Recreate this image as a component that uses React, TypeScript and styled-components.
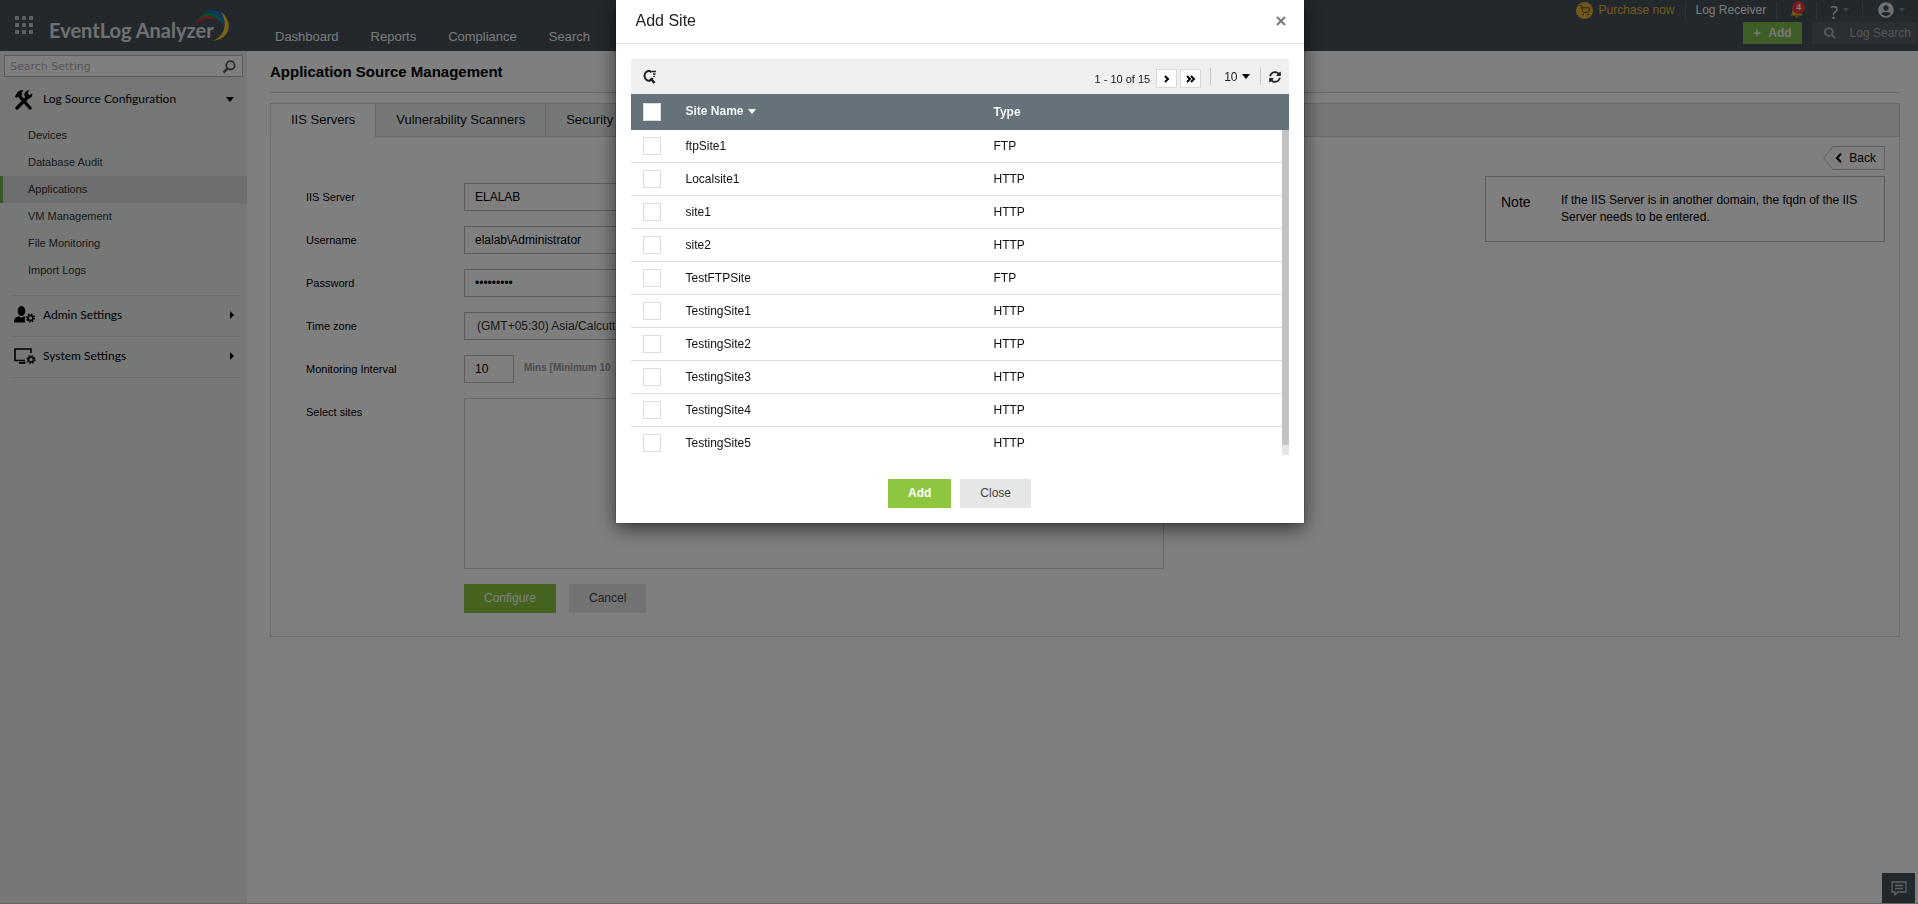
import React from "react";
import styled, { createGlobalStyle } from "styled-components";
import { FaPlus, FaSearch, FaSyncAlt, FaUserCircle } from "react-icons/fa";
import { FiShoppingCart } from "react-icons/fi";
import { MdNotifications } from "react-icons/md";

const GlobalStyle = createGlobalStyle`
  * { box-sizing: border-box; }
  body {
    margin: 0;
    font-family: "Liberation Sans", Arial, sans-serif;
    font-size: 12px;
    color: #000;
    background: #fff;
  }
  button, input, select, textarea { font-family: inherit; font-size: 12px; margin: 0; }
  button { cursor: pointer; padding: 0; border: 0; background: none; }
  a { text-decoration: none; color: inherit; }
  svg { display: block; flex: none; }
`;

const Page = styled.div`
  min-height: 100vh;
  display: flex;
  flex-direction: column;
  border-bottom: 1px solid #ccc;
`;

/* ---------- top bar ---------- */

const TopBar = styled.header`
  display: flex;
  height: 51px;
  background: #465059;
`;

const Brand = styled.div`
  display: flex;
  width: 259px;
  padding: 0 0 0 15px;
  gap: 16px;
`;

const AppsButton = styled.button`
  display: grid;
  grid-template-columns: repeat(3, 4px);
  gap: 3px;
  align-content: start;
  width: 18px;
  padding-top: 16px;
`;

const AppsDot = styled.span`
  height: 4px;
  background: #bcc0c3;
`;

const Logo = styled.div`
  position: relative;
  padding-top: 17px;
  font: 700 20px/26px Lato, sans-serif;
  color: #e0e0e0;
  white-space: nowrap;
`;

const LogoArcs = styled.svg`
  position: absolute;
  left: 146px;
  top: 8px;
`;

const Nav = styled.nav`
  display: flex;
  flex: 1;
  align-items: flex-end;
  padding-bottom: 6px;
`;

const NavLink = styled.a`
  padding: 0 16px;
  font-size: 13px;
  line-height: 16px;
  color: #f2f2f2;
`;

const Tools = styled.div`
  display: flex;
  flex-direction: column;
  align-items: flex-end;
  gap: 2px;
`;

const ToolRow = styled.div`
  display: flex;
  align-items: center;
  height: 20px;
  padding-right: 13px;
`;

const ToolItem = styled.button<{ $gold?: boolean; $pad?: number }>`
  display: flex;
  align-items: center;
  gap: 5px;
  position: relative;
  height: 17px;
  padding: 0 ${(p) => p.$pad ?? 10}px;
  color: ${(p) => (p.$gold ? "#e6b432" : "#f2f2f2")};
  & + & { border-left: 1px solid #5c666e; }
  &:last-child { padding-right: 0; }
`;

const CartBadge = styled.span`
  display: flex;
  align-items: center;
  justify-content: center;
  width: 17px;
  height: 17px;
  border-radius: 50%;
  background: #e6ac32;
  color: #4b4636;
`;

const Count = styled.span`
  position: absolute;
  top: -1px;
  right: 11px;
  width: 13px;
  height: 13px;
  border-radius: 50%;
  background: #e8393a;
  color: #fff;
  font: bold 9px/13px "Liberation Sans", sans-serif;
  text-align: center;
`;

const Question = styled.span`
  font: 18px/17px "Open Sans", sans-serif;
  padding-top: 4px;
  color: #ddd;
`;

const Caret = styled.span<{ $size?: number; $color?: string; $right?: boolean }>`
  width: 0;
  height: 0;
  border: ${(p) => p.$size ?? 4}px solid transparent;
  ${(p) =>
    p.$right
      ? `border-left-color: ${p.$color ?? "#000"}; border-right: 0;`
      : `border-top-color: ${p.$color ?? "#000"}; border-top-width: ${(p.$size ?? 4) + 1}px; border-bottom: 0;`}
`;

const ActionRow = styled.div`
  display: flex;
  gap: 10px;
  padding-right: 1px;
`;

const AddButton = styled.button`
  display: flex;
  align-items: center;
  gap: 7px;
  height: 22px;
  padding: 0 10px;
  font-weight: bold;
  color: #eef2ea;
  background: #80ba50;
`;

const LogSearch = styled.button`
  display: flex;
  align-items: center;
  gap: 14px;
  height: 22px;
  padding: 0 6px 0 12px;
  color: #a9adb0;
  background: #565f66;
`;

/* ---------- sidebar ---------- */

const Body = styled.div`
  display: flex;
  flex: 1;
`;

const Sidebar = styled.aside`
  flex: none;
  width: 247px;
  background: #ecf0ef;
`;

const SearchBox = styled.div`
  display: flex;
  align-items: center;
  height: 22px;
  margin: 4px 4px 0;
  padding: 1px 6px 0 5px;
  background: #fff;
  border: 1px solid #b4b8b8;
`;

const SearchInput = styled.input`
  flex: 1;
  min-width: 0;
  padding: 0;
  border: 0;
  outline: 0;
  background: none;
  font: 11px/16px "DejaVu Sans", sans-serif;
  &::placeholder { color: #adadad; opacity: 1; }
`;

const GroupButton = styled.button`
  display: flex;
  align-items: center;
  width: 100%;
  height: 40px;
  padding: 0 13px 2px 12px;
  font: 12px/18px Lato, sans-serif;
  color: #000;
  text-align: left;
`;

const GroupIcon = styled.span`
  display: flex;
  width: 31px;
  padding-left: 2px;
`;

const GroupLabel = styled.span`
  flex: 1;
`;

const SideGroup = styled.section<{ $open?: boolean }>`
  padding-top: ${(p) => (p.$open ? 3 : 0)}px;
`;

const SideDivider = styled.hr`
  height: 1px;
  margin: 0 7px 0 10px;
  border: 0;
  background: #d8dcdc;
`;

const SideList = styled.ul`
  margin: 2px 0 11px;
  padding: 0;
  list-style: none;
`;

const SideLink = styled.a<{ $active?: boolean }>`
  display: block;
  padding-left: 25px;
  border-left: 3px solid ${(p) => (p.$active ? "#70b04c" : "transparent")};
  font-size: 11px;
  line-height: 27px;
  color: #333;
  background: ${(p) => (p.$active ? "#d9dcdf" : "none")};
`;

/* ---------- main content ---------- */

const Main = styled.main`
  flex: 1;
  min-width: 0;
  padding: 0 18px 20px 23px;
`;

const Title = styled.h1`
  margin: 0 0 10px;
  padding: 11px 0;
  border-bottom: 1px solid #d0d0d0;
  font-size: 15px;
  line-height: 19px;
`;

const Tabs = styled.div`
  display: flex;
  height: 34px;
  background: #ecf0ef;
  border: 1px solid #d2d6d6;
`;

const Tab = styled.button<{ $active?: boolean }>`
  height: ${(p) => (p.$active ? 33 : 32)}px;
  padding: 0 20px 2px;
  border-right: 1px solid #d2d6d6;
  font-size: 13px;
  color: #111;
  background: ${(p) => (p.$active ? "#fff" : "none")};
`;

const Panel = styled.section`
  display: flex;
  justify-content: space-between;
  border: 1px solid #dcdcdc;
  border-top: 0;
`;

const Form = styled.form`
  display: flex;
  flex-direction: column;
  gap: 15px;
  padding: 46px 0 23px 35px;
`;

const Field = styled.div`
  display: flex;
`;

const FieldLabel = styled.label`
  width: 158px;
  font-size: 11px;
  line-height: 28px;
`;

const TextInput = styled.input<{ $short?: boolean }>`
  width: ${(p) => (p.$short ? 50 : 300)}px;
  height: 28px;
  padding: 0 10px;
  border: 1px solid #bdbdbd;
  background: #fff;
`;

const Select = styled.select`
  width: 300px;
  height: 28px;
  padding: 0 12px;
  border: 1px solid #bdbdbd;
  background: #fff;
  color: #333;
  appearance: none;
`;

const Hint = styled.span`
  padding-left: 10px;
  font-size: 10px;
  font-weight: bold;
  line-height: 26px;
  color: #999;
`;

const SiteBox = styled.textarea`
  width: 700px;
  height: 171px;
  border: 1px solid #d0d0d0;
  background: #fff;
  resize: none;
`;

const FormActions = styled.div`
  display: flex;
  gap: 13px;
  padding-left: 158px;
`;

const Button = styled.button<{ $primary?: boolean; $bold?: boolean }>`
  height: 29px;
  padding: 0 20px 1px;
  font-weight: ${(p) => (p.$bold ? "bold" : "normal")};
  color: ${(p) => (p.$primary ? "#fff" : "#444")};
  background: ${(p) => (p.$primary ? "#8dc63f" : "#e6e6e6")};
`;

const Side = styled.div`
  display: flex;
  flex-direction: column;
  align-items: flex-end;
  gap: 6px;
  padding: 9px 14px 0 0;
`;

const BackButton = styled.button`
  display: flex;
  height: 24px;
  line-height: 22px;
`;

const BackLabel = styled.span`
  display: flex;
  align-items: center;
  gap: 7px;
  height: 24px;
  padding: 0 8px 0 2px;
  border: 1px solid #c4c4c4;
  border-left: 0;
`;

const NoteBox = styled.div`
  display: flex;
  width: 400px;
  height: 66px;
  padding: 15px 15px 0;
  border: 1px solid #bdbdbd;
  line-height: 17px;
`;

const NoteTitle = styled.div`
  width: 60px;
  flex: none;
  padding-top: 2px;
  font-size: 14px;
`;

const ChatButton = styled.button`
  position: fixed;
  right: 3px;
  bottom: 1px;
  display: flex;
  align-items: center;
  justify-content: center;
  width: 33px;
  height: 30px;
  background: #465059;
`;

/* ---------- dialog ---------- */

const Backdrop = styled.div`
  position: fixed;
  inset: 0;
  display: flex;
  align-items: flex-start;
  justify-content: center;
  background: rgba(0, 0, 0, 0.5);
`;

const Dialog = styled.div`
  width: 688px;
  margin-left: 1px;
  background: #fff;
  box-shadow: 0 0 1px rgba(0, 0, 0, 0.8), 0 5px 18px rgba(0, 0, 0, 0.6);
`;

const DialogHead = styled.div`
  display: flex;
  justify-content: space-between;
  align-items: center;
  height: 44px;
  padding: 0 18px 2px 20px;
  border-bottom: 1px solid #e2e2e2;
`;

const DialogTitle = styled.h2`
  margin: 0;
  font-size: 16px;
  font-weight: normal;
  line-height: 20px;
  color: #222;
`;

const DialogBody = styled.div`
  padding: 15px 15px 0;
`;

const Toolbar = styled.div`
  display: flex;
  align-items: center;
  justify-content: space-between;
  height: 35px;
  padding: 0 8px 0 12px;
  background: #efefef;
`;

const Pager = styled.div`
  display: flex;
  align-items: center;
  color: #222;
`;

const Range = styled.span`
  padding: 4px 6px 0 0;
  font-size: 11px;
`;

const PageButton = styled.button`
  display: flex;
  align-items: center;
  justify-content: center;
  width: 21px;
  height: 19px;
  margin: 4px 3px 0 0;
  border: 1px solid #d5dada;
  background: #fff;
`;

const PagerCell = styled.div`
  display: flex;
  align-items: center;
  height: 17px;
  margin-left: 6px;
  padding: 0 4px 0 13px;
  border-left: 1px solid #c8c8c8;
  & + & { padding: 0 0 0 8px; }
`;

const PlainButton = styled.button`
  display: flex;
  align-items: center;
  gap: 4px;
  color: #222;
`;

const TableWrap = styled.div`
  position: relative;
`;

const Scroller = styled.div`
  max-height: 361px;
  overflow-y: auto;
  scrollbar-width: none;
`;

const Table = styled.table`
  width: 100%;
  border-collapse: separate;
  border-spacing: 0;
  table-layout: fixed;
`;

const HeadCell = styled.th<{ $w?: number }>`
  width: ${(p) => (p.$w ? `${p.$w}px` : "auto")};
  height: 36px;
  padding: 0;
  text-align: left;
  color: #f2f4f5;
  background: #66727a;
`;

const Cell = styled.td`
  height: 33px;
  padding: 0;
  border-bottom: 1px solid #dcdcdc;
  color: #111;
`;

const Sort = styled.button`
  display: flex;
  align-items: center;
  gap: 4px;
  padding-bottom: 2px;
  font-weight: bold;
  color: inherit;
`;

const Check = styled.input`
  appearance: none;
  display: block;
  width: 18px;
  height: 18px;
  margin: 0 0 0 12px;
  border: 1px solid #dcdcdc;
  background: #fff;
`;

const ScrollTrack = styled.div`
  position: absolute;
  top: 36px;
  right: 0;
  bottom: 0;
  width: 7px;
  background: #e3e6e8;
`;

const ScrollThumb = styled.div`
  height: 97%;
  background: #c1c3c5;
`;

const DialogActions = styled.div`
  display: flex;
  justify-content: center;
  gap: 9px;
  padding: 24px 0 15px;
`;

/* ---------- drawings ---------- */

const ToolsIcon = () => (
  <svg width="19" height="21" viewBox="0 0 19 21" aria-hidden="true">
    <path d="M5 6.500 16 19" stroke="#000" strokeWidth="3.400" strokeLinecap="round" />
    <path d="M1 7.500 L4 2.500 L8 1 L9.500 1.800 L7.500 3.500 L8.500 5.500 L5 8.500 L3.800 7.300 L2.300 9 Z" />
    <path d="M13 9 3 19" stroke="#000" strokeWidth="3.200" strokeLinecap="round" />
    <path d="M10.500 7 C9.800 3.800 12 1.200 15.300 1.500 L13.500 4.200 L15.300 6.200 L18.300 4.500 C18.700 8 16 10.300 12.800 9.500 Z" />
  </svg>
);

const Gear = ({ cx, cy }: { cx: number; cy: number }) => (
  <g fill="none" stroke="#000">
    <circle cx={cx} cy={cy} r="2.500" strokeWidth="1.700" />
    <circle cx={cx} cy={cy} r="3.900" strokeWidth="1.400" strokeDasharray="1.530 1.530" />
  </g>
);

const AdminIcon = () => (
  <svg width="22" height="18" viewBox="0 0 22 18" aria-hidden="true">
    <ellipse cx="7.500" cy="5" rx="3.800" ry="5" />
    <path d="M0 16.500 C0 12 2 11.300 5 10.300 C6.500 12 8.500 12 10 10.300 L11.500 11 C10.300 13 10.600 15 11.600 16.500 Z" />
    <Gear cx={16.5} cy={12} />
  </svg>
);

const SystemIcon = () => (
  <svg width="22" height="17" viewBox="0 0 22 17" aria-hidden="true">
    <path d="M17 5 V1 H1 V12.500 H11" fill="none" stroke="#000" strokeWidth="1.600" />
    <path d="M5 14 H11.500 V15.800 H5 Z" />
    <Gear cx={17} cy={11.5} />
  </svg>
);

const Magnifier = () => (
  <svg width="14" height="14" viewBox="0 0 14 14" fill="none" stroke="#555" aria-hidden="true">
    <circle cx="8.500" cy="5.300" r="4.200" strokeWidth="1.800" />
    <path d="M5.500 8.500 1.500 12.700" strokeWidth="2.400" />
  </svg>
);

const FilterSearch = () => (
  <svg width="14" height="14" viewBox="0 0 14 14" fill="none" stroke="#222" aria-hidden="true">
    <path d="M8.500 2.200 A4.200 4.800 0 1 0 9.500 8" strokeWidth="2" />
    <path d="M7.500 8.500 11.500 13" strokeWidth="2.600" />
    <path d="M9 1.500 H13 M10 4 H12.500 M10.300 6.300 H11.800" strokeWidth="1.300" />
  </svg>
);

const Chevrons = ({ double }: { double?: boolean }) => (
  <svg width={double ? 10 : 6} height="8" viewBox={double ? "0 0 10 8" : "0 0 6 8"} fill="none" stroke="#000" strokeWidth="2" aria-hidden="true">
    <path d="M1 1 4 4 1 7" />
    {double && <path d="M5 1 8 4 5 7" />}
  </svg>
);

const LogoMark = () => (
  <LogoArcs width="36" height="34" viewBox="0 0 36 34" aria-hidden="true">
    <path d="M0 18 C4 7 14 5 22 12 C14 9.500 5 11 0 18 Z" fill="#d8323c" />
    <path d="M3 11 C10 2 23 2 27 15 C21 7 12 6 3 11 Z" fill="#10a04c" />
    <path d="M9 4 C21 -2 32 6 29 20 C27 10 20 4 9 4 Z" fill="#1a76c0" />
    <path d="M26 4 C38 13 37 31 17 33 C30 29 33 15 26 4 Z" fill="#f6c52c" />
  </LogoArcs>
);

/* ---------- data ---------- */

const navItems = ["Dashboard", "Reports", "Compliance", "Search"];
const sideItems = ["Devices", "Database Audit", "Applications", "VM Management", "File Monitoring", "Import Logs"];
const tabs = ["IIS Servers", "Vulnerability Scanners", "Security"];
const sites = [
  ["ftpSite1", "FTP"],
  ["Localsite1", "HTTP"],
  ["site1", "HTTP"],
  ["site2", "HTTP"],
  ["TestFTPSite", "FTP"],
  ["TestingSite1", "HTTP"],
  ["TestingSite2", "HTTP"],
  ["TestingSite3", "HTTP"],
  ["TestingSite4", "HTTP"],
  ["TestingSite5", "HTTP"],
];

export default function App() {
  return (
    <>
      <GlobalStyle />
      <Page>
        <TopBar>
          <Brand>
            <AppsButton aria-label="Apps">
              {Array.from({ length: 9 }, (_, i) => (
                <AppsDot key={i} />
              ))}
            </AppsButton>
            <Logo>
              EventLog Analyzer
              <LogoMark />
            </Logo>
          </Brand>
          <Nav>
            {navItems.map((n) => (
              <NavLink href="#" key={n}>{n}</NavLink>
            ))}
          </Nav>
          <Tools>
            <ToolRow>
              <ToolItem $gold>
                <CartBadge><FiShoppingCart size={11} /></CartBadge>
                Purchase now
              </ToolItem>
              <ToolItem>Log Receiver</ToolItem>
              <ToolItem $pad={11} aria-label="Notifications">
                <MdNotifications size={17} color="#e0b020" />
                <Count>4</Count>
              </ToolItem>
              <ToolItem $pad={13} aria-label="Help">
                <Question>?</Question>
                <Caret $size={3} $color="#7c858b" />
              </ToolItem>
              <ToolItem $pad={15} aria-label="Account">
                <FaUserCircle size={16} color="#ddd" />
                <Caret $size={3} $color="#7c858b" />
              </ToolItem>
            </ToolRow>
            <ActionRow>
              <AddButton><FaPlus size={8} />Add</AddButton>
              <LogSearch><FaSearch size={12} />Log Search</LogSearch>
            </ActionRow>
          </Tools>
        </TopBar>

        <Body>
          <Sidebar>
            <SearchBox>
              <SearchInput placeholder="Search Setting" aria-label="Search Setting" />
              <Magnifier />
            </SearchBox>
            <SideGroup $open>
              <GroupButton>
                <GroupIcon><ToolsIcon /></GroupIcon>
                <GroupLabel>Log Source Configuration</GroupLabel>
                <Caret />
              </GroupButton>
              <SideList>
                {sideItems.map((s) => (
                  <li key={s}>
                    <SideLink href="#" $active={s === "Applications"}>{s}</SideLink>
                  </li>
                ))}
              </SideList>
            </SideGroup>
            <SideDivider />
            <SideGroup>
              <GroupButton>
                <GroupIcon><AdminIcon /></GroupIcon>
                <GroupLabel>Admin Settings</GroupLabel>
                <Caret $right />
              </GroupButton>
            </SideGroup>
            <SideDivider />
            <SideGroup>
              <GroupButton>
                <GroupIcon><SystemIcon /></GroupIcon>
                <GroupLabel>System Settings</GroupLabel>
                <Caret $right />
              </GroupButton>
            </SideGroup>
            <SideDivider />
          </Sidebar>

          <Main>
            <Title>Application Source Management</Title>
            <Tabs role="tablist">
              {tabs.map((t, i) => (
                <Tab key={t} role="tab" aria-selected={i === 0} $active={i === 0}>{t}</Tab>
              ))}
            </Tabs>
            <Panel>
              <Form onSubmit={(e) => e.preventDefault()}>
                <Field>
                  <FieldLabel htmlFor="server">IIS Server</FieldLabel>
                  <TextInput id="server" defaultValue="ELALAB" />
                </Field>
                <Field>
                  <FieldLabel htmlFor="user">Username</FieldLabel>
                  <TextInput id="user" defaultValue="elalab\Administrator" />
                </Field>
                <Field>
                  <FieldLabel htmlFor="pass">Password</FieldLabel>
                  <TextInput id="pass" type="password" defaultValue="elalab123" />
                </Field>
                <Field>
                  <FieldLabel htmlFor="zone">Time zone</FieldLabel>
                  <Select id="zone">
                    <option>(GMT+05:30) Asia/Calcutta</option>
                  </Select>
                </Field>
                <Field>
                  <FieldLabel htmlFor="interval">Monitoring Interval</FieldLabel>
                  <TextInput id="interval" $short defaultValue="10" />
                  <Hint>Mins [Minimum 10</Hint>
                </Field>
                <Field>
                  <FieldLabel htmlFor="sites">Select sites</FieldLabel>
                  <SiteBox id="sites" />
                </Field>
                <FormActions>
                  <Button $primary>Configure</Button>
                  <Button>Cancel</Button>
                </FormActions>
              </Form>
              <Side>
                <BackButton>
                  <svg width="10" height="24" viewBox="0 0 10 24" fill="none" stroke="#c4c4c4" aria-hidden="true">
                    <path d="M10 .5 L.7 12 L10 23.500" />
                  </svg>
                  <BackLabel>
                    <svg width="7" height="10" viewBox="0 0 7 10" fill="none" stroke="#000" strokeWidth="2" aria-hidden="true">
                      <path d="M6 .8 2 5 6 9.200" />
                    </svg>
                    Back
                  </BackLabel>
                </BackButton>
                <NoteBox>
                  <NoteTitle>Note</NoteTitle>
                  <div>If the IIS Server is in another domain, the fqdn of the IIS Server needs to be entered.</div>
                </NoteBox>
              </Side>
            </Panel>
          </Main>
        </Body>
        <ChatButton aria-label="Chat">
          <svg width="16" height="15" viewBox="0 0 16 15" fill="none" stroke="#bfc3c6" aria-hidden="true">
            <path d="M1 1 H15 V11 H7 L4 14 V11 H1 Z" strokeWidth="1.300" />
            <path d="M4 4.500 H12 M4 7.500 H12" strokeWidth="1.300" />
          </svg>
        </ChatButton>
      </Page>

      <Backdrop>
        <Dialog role="dialog" aria-labelledby="dialog-title">
          <DialogHead>
            <DialogTitle id="dialog-title">Add Site</DialogTitle>
            <PlainButton aria-label="Close dialog">
              <svg width="10" height="10" viewBox="0 0 10 10" stroke="#777" strokeWidth="2" aria-hidden="true">
                <path d="M1 1 9 9 M9 1 1 9" />
              </svg>
            </PlainButton>
          </DialogHead>
          <DialogBody>
            <Toolbar>
              <PlainButton aria-label="Filter sites"><FilterSearch /></PlainButton>
              <Pager>
                <Range>1 - 10 of 15</Range>
                <PageButton aria-label="Next page"><Chevrons /></PageButton>
                <PageButton aria-label="Last page"><Chevrons double /></PageButton>
                <PagerCell>
                  <PlainButton>10<Caret /></PlainButton>
                </PagerCell>
                <PagerCell>
                  <PlainButton aria-label="Refresh"><FaSyncAlt size={12} /></PlainButton>
                </PagerCell>
              </Pager>
            </Toolbar>
            <TableWrap>
              <Scroller>
                <Table>
                  <thead>
                    <tr>
                      <HeadCell $w={55}><Check type="checkbox" aria-label="Select all sites" /></HeadCell>
                      <HeadCell $w={308}><Sort>Site Name<Caret $color="#fff" /></Sort></HeadCell>
                      <HeadCell>Type</HeadCell>
                    </tr>
                  </thead>
                  <tbody>
                    {sites.map(([name, type]) => (
                      <tr key={name}>
                        <Cell><Check type="checkbox" aria-label={name} /></Cell>
                        <Cell>{name}</Cell>
                        <Cell>{type}</Cell>
                      </tr>
                    ))}
                  </tbody>
                </Table>
              </Scroller>
              <ScrollTrack><ScrollThumb /></ScrollTrack>
            </TableWrap>
            <DialogActions>
              <Button $primary $bold>Add</Button>
              <Button>Close</Button>
            </DialogActions>
          </DialogBody>
        </Dialog>
      </Backdrop>
    </>
  );
}
